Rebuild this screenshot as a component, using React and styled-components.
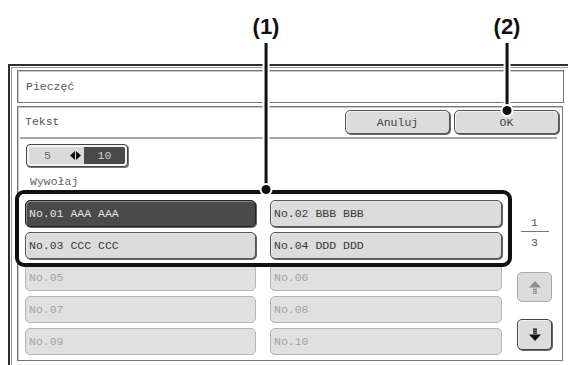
import styled, { createGlobalStyle } from "styled-components";

const GlobalStyle = createGlobalStyle`
  html, body { margin: 0; padding: 0; background: #fff; }
  body { font-family: "Liberation Mono", "DejaVu Sans Mono", monospace; }
`;

const Page = styled.div`
  position: relative;
  width: 568px;
  height: 365px;
  overflow: hidden;
  padding: 64px 0 0 8px;
  box-sizing: border-box;
  background: #fff;
`;

const OuterFrame = styled.div`
  width: 600px;
  height: 320px;
  border-top: 2px solid #2e2e2e;
  border-left: 2px solid #2e2e2e;
`;

const InnerFrame = styled.div`
  margin: 1px 0 0 1px;
  height: 100%;
  border-top: 1px solid #9a9a9a;
  border-left: 1px solid #9a9a9a;
  padding: 2px 0 0 5px;
`;

const TitleBox = styled.div`
  width: 547px;
  height: 33px;
  box-sizing: border-box;
  border: 1px solid #777;
  box-shadow: inset 1px 1px 0 #c8c8c8;
  display: flex;
  align-items: center;
  padding-left: 8px;
  font-size: 11.5px;
  color: #555;
`;

const Panel = styled.div`
  margin-top: 3px;
  width: 546px;
  height: 255px;
  box-sizing: border-box;
  border: 1px solid #777;
  box-shadow: inset 1px 1px 0 #c8c8c8;
`;

const Header = styled.div`
  height: 30px;
  box-sizing: border-box;
  display: flex;
  align-items: flex-start;
  padding: 3px 3px 0 7px;
`;

const HeaderTitle = styled.span`
  flex: 1;
  line-height: 24px;
  font-size: 11.5px;
  color: #555;
`;

const Separator = styled.div`
  height: 2px;
  margin: 0 5px 0 2px;
  background: #a8a8a8;
`;

const Key = styled.button`
  width: 105px;
  height: 24px;
  margin-left: ${(p) => p.$gap || 0}px;
  padding: 0;
  box-sizing: border-box;
  border: 1px solid #555;
  border-radius: 5px;
  background: #dcdcdc;
  box-shadow: 1px 1px 0 #666, inset 1px 1px 0 #f2f2f2;
  font-family: inherit;
  font-size: 11.5px;
  color: #444;
`;

const Body = styled.div`
  padding-left: 7px;
`;

const Toggle = styled.div`
  margin: 5px 0 0 1px;
  width: 102px;
  height: 23px;
  box-sizing: border-box;
  border: 1px solid #444;
  border-radius: 4px;
  box-shadow: 1px 1px 0 #777;
  padding: 2px;
  display: flex;
  background: #f4f4f4;
`;

const ToggleSide = styled.div`
  box-sizing: border-box;
  display: flex;
  align-items: center;
  justify-content: ${(p) => (p.$dark ? "center" : "space-between")};
  width: ${(p) => (p.$dark ? "41px" : "55px")};
  padding: ${(p) => (p.$dark ? "0" : "0 3px 0 15px")};
  background: ${(p) => (p.$dark ? "#4a4a4a" : "#dadada")};
  color: ${(p) => (p.$dark ? "#d0d0d0" : "#666")};
  font-size: 11.5px;
  border-radius: ${(p) => (p.$dark ? "0 2px 2px 0" : "2px 0 0 2px")};
`;

const Label = styled.div`
  margin: 8px 0 0 5px;
  height: 14px;
  line-height: 14px;
  font-size: 11.5px;
  color: #666;
`;

const ListArea = styled.div`
  display: flex;
  margin-top: 11px;
`;

const GridWrap = styled.div`
  position: relative;
`;

const Grid = styled.div`
  display: grid;
  grid-template-columns: 231px 232px;
  grid-auto-rows: 27px;
  column-gap: 14px;
  row-gap: 5px;
`;

const Entry = styled.div`
  box-sizing: border-box;
  display: flex;
  align-items: center;
  padding-left: 3px;
  border-radius: 5px;
  font-size: 11.5px;
  white-space: pre;
  border: 1px solid ${(p) => (p.$state === "off" ? "#b4b4b4" : p.$state === "on" ? "#222" : "#555")};
  background: ${(p) => (p.$state === "on" ? "#4a4a4a" : p.$state === "off" ? "#e0e0e0" : "#dcdcdc")};
  color: ${(p) => (p.$state === "on" ? "#e4e4e4" : p.$state === "off" ? "#a6a6a6" : "#3a3a3a")};
  box-shadow: ${(p) =>
    p.$state === "off" ? "none" : "1px 1px 0 #666, inset 1px 1px 0 rgba(255,255,255,0.35)"};
`;

const Highlight = styled.div`
  position: absolute;
  left: -10px;
  top: -10px;
  width: 497px;
  height: 77px;
  box-sizing: border-box;
  border: 4px solid #111;
  border-radius: 9px;
  pointer-events: none;
`;

const Side = styled.div`
  margin-left: 15px;
  width: 35px;
  display: flex;
  flex-direction: column;
  align-items: center;
`;

const PageNum = styled.div`
  height: 14px;
  line-height: 14px;
  margin-top: ${(p) => p.$top}px;
  font-size: 11.5px;
  color: #555;
`;

const Rule = styled.div`
  width: 28px;
  height: 1px;
  margin-top: 1px;
  background: #777;
`;

const ArrowKey = styled.div`
  width: 35px;
  height: ${(p) => p.$h}px;
  margin-top: ${(p) => p.$top}px;
  box-sizing: border-box;
  border-radius: 5px;
  display: flex;
  align-items: center;
  justify-content: center;
  background: #dcdcdc;
  border: 1px solid ${(p) => (p.$off ? "#a8a8a8" : "#444")};
  box-shadow: ${(p) => (p.$off ? "none" : "1px 1px 0 #666, inset 1px 1px 0 #f2f2f2")};
  color: ${(p) => (p.$off ? "#8c8c8c" : "#111")};
`;

const Callout = styled.div`
  position: absolute;
  left: ${(p) => p.$x}px;
  top: 13px;
  transform: translateX(-50%);
  display: flex;
  flex-direction: column;
  align-items: center;
  pointer-events: none;
`;

const CalloutText = styled.div`
  font-family: "Liberation Sans", Arial, sans-serif;
  font-weight: bold;
  font-size: 22px;
  line-height: 27px;
  color: #111;
`;

const CalloutLine = styled.div`
  width: 3px;
  height: ${(p) => p.$len}px;
  margin-top: 3px;
  background: #111;
  box-shadow: 0 0 0 2px #fff;
`;

const CalloutDot = styled.div`
  width: 9px;
  height: 9px;
  margin-top: -5px;
  border-radius: 50%;
  background: #111;
  box-shadow: 0 0 0 2px #fff;
`;

const SwapIcon = () => (
  <svg width="11" height="9" viewBox="0 0 11 9">
    <polygon points="5,0 5,9 0,4.5" fill="#111" />
    <polygon points="6,0 6,9 11,4.5" fill="#111" />
  </svg>
);

const UpIcon = () => (
  <svg width="14" height="14" viewBox="0 0 14 14" fill="currentColor">
    <polygon points="7,1 13,7.5 1,7.5" />
    <rect x="5" y="8.5" width="4" height="1.3" />
    <rect x="5" y="10.5" width="4" height="1.3" />
    <rect x="5" y="12.5" width="4" height="1.3" />
  </svg>
);

const DownIcon = () => (
  <svg width="14" height="14" viewBox="0 0 14 14" fill="currentColor">
    <rect x="5" y="0.5" width="4" height="1.3" />
    <rect x="5" y="2.5" width="4" height="1.3" />
    <rect x="5" y="4.5" width="4" height="1.3" />
    <polygon points="1,6.5 13,6.5 7,13" />
  </svg>
);

const entries = [
  { label: "No.01 AAA AAA", state: "on" },
  { label: "No.02 BBB BBB", state: "ready" },
  { label: "No.03 CCC CCC", state: "ready" },
  { label: "No.04 DDD DDD", state: "ready" },
  { label: "No.05", state: "off" },
  { label: "No.06", state: "off" },
  { label: "No.07", state: "off" },
  { label: "No.08", state: "off" },
  { label: "No.09", state: "off" },
  { label: "No.10", state: "off" },
];

export default function App() {
  return (
    <>
      <GlobalStyle />
      <Page>
        <OuterFrame>
          <InnerFrame>
            <TitleBox>Pieczęć</TitleBox>
            <Panel>
              <Header>
                <HeaderTitle>Tekst</HeaderTitle>
                <Key>Anuluj</Key>
                <Key $gap={4}>OK</Key>
              </Header>
              <Separator />
              <Body>
                <Toggle>
                  <ToggleSide>
                    <span>5</span>
                    <SwapIcon />
                  </ToggleSide>
                  <ToggleSide $dark>10</ToggleSide>
                </Toggle>
                <Label>Wywołaj</Label>
                <ListArea>
                  <GridWrap>
                    <Grid>
                      {entries.map((e) => (
                        <Entry key={e.label} $state={e.state}>
                          {e.label}
                        </Entry>
                      ))}
                    </Grid>
                    <Highlight />
                  </GridWrap>
                  <Side>
                    <PageNum $top={16}>1</PageNum>
                    <Rule />
                    <PageNum $top={4}>3</PageNum>
                    <ArrowKey $off $h={30} $top={22}>
                      <UpIcon />
                    </ArrowKey>
                    <ArrowKey $h={31} $top={17}>
                      <DownIcon />
                    </ArrowKey>
                  </Side>
                </ListArea>
              </Body>
            </Panel>
          </InnerFrame>
        </OuterFrame>

        <Callout $x={266}>
          <CalloutText>(1)</CalloutText>
          <CalloutLine $len={147} />
          <CalloutDot />
        </Callout>
        <Callout $x={507}>
          <CalloutText>(2)</CalloutText>
          <CalloutLine $len={68} />
          <CalloutDot />
        </Callout>
      </Page>
    </>
  );
}
